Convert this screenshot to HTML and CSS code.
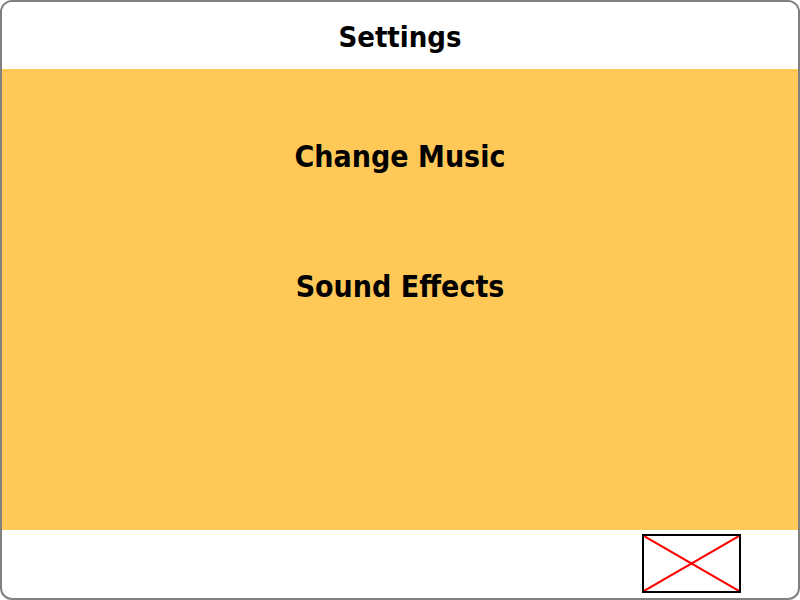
FILE: index.html
```html
<!DOCTYPE html>
<html>
<head>
<meta charset="utf-8">
<link rel="stylesheet" href="styles.css">
</head>
<body>
<div class="frame">
  <header class="header"><h1 class="title">Settings</h1></header>
  <main class="content">
    <div class="item">Change Music</div>
    <div class="item">Sound Effects</div>
  </main>
  <footer class="footer">
    <div class="broken">
      <svg viewBox="0 0 95 55" preserveAspectRatio="none" width="95" height="55">
        <line x1="0" y1="0" x2="95" y2="55" stroke="#ff0000" stroke-width="2"/>
        <line x1="95" y1="0" x2="0" y2="55" stroke="#ff0000" stroke-width="2"/>
      </svg>
    </div>
  </footer>
</div>
</body>
</html>
```

FILE: styles.css
```css
html, body {
  margin: 0;
  padding: 0;
  background: #ffffff;
}
.frame {
  box-sizing: border-box;
  width: 800px;
  height: 600px;
  border: 2px solid #808080;
  border-radius: 12px;
  overflow: hidden;
  display: flex;
  flex-direction: column;
  font-family: "DejaVu Sans", sans-serif;
  font-weight: bold;
  font-stretch: condensed;
  color: #000;
}
.header {
  height: 67px;
  display: flex;
  align-items: center;
  justify-content: center;
  background: #fff;
}
.title {
  margin: 0;
  font-size: 29px;
  font-weight: bold;
  line-height: 1;
  padding-top: 4px;
}
.content {
  height: 461px;
  background: #ffc857;
  padding-top: 22px;
  box-sizing: border-box;
}
.item {
  height: 130px;
  display: flex;
  align-items: center;
  justify-content: center;
  font-size: 30px;
}
.footer {
  flex: 1;
  display: flex;
  justify-content: flex-end;
  align-items: flex-start;
  padding-top: 4px;
  padding-right: 57px;
}
.broken {
  width: 95px;
  height: 55px;
  border: 2px solid #000;
  display: flex;
}
.broken svg {
  display: block;
}
```
